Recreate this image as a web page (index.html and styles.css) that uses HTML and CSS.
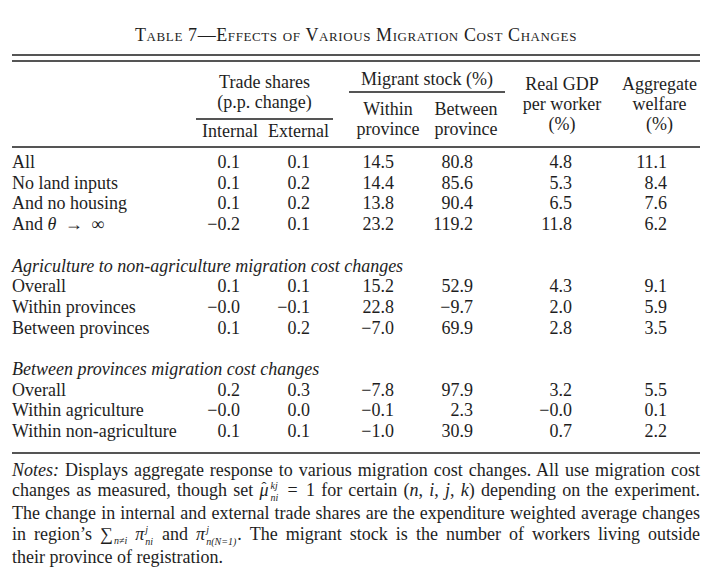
FILE: index.html
```html
<!DOCTYPE html>
<html lang="en">
<head>
<meta charset="utf-8">
<title>Table 7</title>
<link rel="stylesheet" href="styles.css">
</head>
<body>
<div class="page">
  <div class="title">Table 7—Effects of Various Migration Cost Changes</div>
  <div class="double-rule"></div>

  <div class="thead">
    <div class="hcell"></div>
    <div class="hcell grp-trade">
      <div class="grp-top">Trade shares<br>(p.p. change)</div>
      <div class="grp-sub">
        <span class="sub-a">Internal</span><span class="sub-b">External</span>
      </div>
    </div>
    <div class="hcell"></div>
    <div class="hcell grp-mig">
      <div class="grp-top">Migrant stock (%)</div>
      <div class="grp-sub mig-sub">
        <span class="sub-c">Within<br>province</span><span class="sub-c">Between<br>province</span>
      </div>
    </div>
    <div class="hcell grp-single">Real GDP<br>per worker<br>(%)</div>
    <div class="hcell grp-single">Aggregate<br>welfare<br>(%)</div>
  </div>

  <div class="tbody">
    <table class="data">
      <colgroup>
        <col class="w-label"><col class="w-c1"><col class="w-c2"><col class="w-sp"><col class="w-c3"><col class="w-c4"><col class="w-c5"><col class="w-c6">
      </colgroup>
      <tbody>
        <tr><td>All</td><td class="n1">0.1</td><td class="n2">0.1</td><td></td><td class="n3">14.5</td><td class="n4">80.8</td><td class="n5">4.8</td><td class="n6">11.1</td></tr>
        <tr><td>No land inputs</td><td class="n1">0.1</td><td class="n2">0.2</td><td></td><td class="n3">14.4</td><td class="n4">85.6</td><td class="n5">5.3</td><td class="n6">8.4</td></tr>
        <tr><td>And no housing</td><td class="n1">0.1</td><td class="n2">0.2</td><td></td><td class="n3">13.8</td><td class="n4">90.4</td><td class="n5">6.5</td><td class="n6">7.6</td></tr>
        <tr><td>And <i>θ</i> <span class="arrow">→</span> ∞</td><td class="n1">−0.2</td><td class="n2">0.1</td><td></td><td class="n3">23.2</td><td class="n4">119.2</td><td class="n5">11.8</td><td class="n6">6.2</td></tr>
        <tr class="blank"><td colspan="8"></td></tr>
        <tr><td colspan="8" class="section">Agriculture to non-agriculture migration cost changes</td></tr>
        <tr><td>Overall</td><td class="n1">0.1</td><td class="n2">0.1</td><td></td><td class="n3">15.2</td><td class="n4">52.9</td><td class="n5">4.3</td><td class="n6">9.1</td></tr>
        <tr><td>Within provinces</td><td class="n1">−0.0</td><td class="n2">−0.1</td><td></td><td class="n3">22.8</td><td class="n4">−9.7</td><td class="n5">2.0</td><td class="n6">5.9</td></tr>
        <tr><td>Between provinces</td><td class="n1">0.1</td><td class="n2">0.2</td><td></td><td class="n3">−7.0</td><td class="n4">69.9</td><td class="n5">2.8</td><td class="n6">3.5</td></tr>
        <tr class="blank"><td colspan="8"></td></tr>
        <tr><td colspan="8" class="section">Between provinces migration cost changes</td></tr>
        <tr><td>Overall</td><td class="n1">0.2</td><td class="n2">0.3</td><td></td><td class="n3">−7.8</td><td class="n4">97.9</td><td class="n5">3.2</td><td class="n6">5.5</td></tr>
        <tr><td>Within agriculture</td><td class="n1">−0.0</td><td class="n2">0.0</td><td></td><td class="n3">−0.1</td><td class="n4">2.3</td><td class="n5">−0.0</td><td class="n6">0.1</td></tr>
        <tr><td>Within non-agriculture</td><td class="n1">0.1</td><td class="n2">0.1</td><td></td><td class="n3">−1.0</td><td class="n4">30.9</td><td class="n5">0.7</td><td class="n6">2.2</td></tr>
      </tbody>
    </table>
  </div>

  <div class="notes">
    <div class="nl"><i>Notes:</i> Displays aggregate response to various migration cost changes. All use migration cost</div>
    <div class="nl">changes as measured, though set <i class="hat">μ</i><span class="ss ss-mu"><span>kj</span><span>ni</span></span> <span class="eq">=</span> 1 for certain <span class="paren">(</span><i>n</i>, <i>i</i>, <i>j</i>, <i>k</i><span class="paren">)</span> depending on the experiment.</div>
    <div class="nl">The change in internal and external trade shares are the expenditure weighted average changes</div>
    <div class="nl">in region’s <span class="sum">∑</span><span class="msub">n≠i</span> <i>π</i><span class="ss"><span>j</span><span>ni</span></span> and <i>π</i><span class="ss"><span>j</span><span><i>n</i>(<i>N</i>=1)</span></span>. The migrant stock is the number of workers living outside</div>
    <div class="nl last">their province of registration.</div>
  </div>
</div>
</body>
</html>
```

FILE: styles.css
```css
html, body {
  margin: 0;
  padding: 0;
  background: #ffffff;
}

body {
  font-family: "Liberation Serif", "Times New Roman", serif;
  font-size: 18px;
  color: #1e1e1e;
}

.page {
  width: 688px;
  margin-left: 12px;
  padding-top: 25px;
}

.title {
  font-size: 18px;
  line-height: 20px;
  text-align: center;
  font-variant: small-caps;
  letter-spacing: 0.6px;
}

.double-rule {
  margin-top: 9px;
  height: 4px;
  border-top: 2px solid #555;
  border-bottom: 2px solid #555;
}

/* header */
.thead {
  display: grid;
  grid-template-columns: 184px 137px 16px 156px 114px 81px;
  height: 84px;
  border-bottom: 2px solid #555;
  line-height: 20px;
  text-align: center;
}

.grp-trade {
  padding-top: 10px;
}

.grp-trade .grp-top {
  padding-bottom: 6px;
  border-bottom: 2px solid #555;
}

.grp-sub {
  display: flex;
  margin-top: 1px;
}

.sub-a {
  width: 68px;
  text-align: center;
}

.sub-b {
  width: 69px;
  text-align: center;
}

.grp-mig {
  padding-top: 7px;
}

.grp-mig .grp-top {
  padding-bottom: 2px;
  border-bottom: 2px solid #555;
}

.mig-sub {
  margin-top: 6px;
}

.sub-c {
  width: 78px;
  text-align: center;
}

.grp-single {
  padding-top: 12px;
}

/* body */
.tbody {
  padding-top: 4px;
  padding-bottom: 10px;
  border-bottom: 2px solid #555;
}

.data {
  width: 688px;
  table-layout: fixed;
  border-collapse: collapse;
}

.data td {
  padding: 0;
  line-height: 20.7px;
  height: 20.7px;
  white-space: nowrap;
  text-align: right;
}

.data td:first-child {
  text-align: left;
}

.data td.section {
  text-align: left;
  font-style: italic;
}

.w-label { width: 184px; }
.w-c1 { width: 68px; }
.w-c2 { width: 69px; }
.w-sp { width: 16px; }
.w-c3 { width: 78px; }
.w-c4 { width: 78px; }
.w-c5 { width: 114px; }
.w-c6 { width: 81px; }

.data td.n1 { padding-right: 24px; }
.data td.n2 { padding-right: 23px; }
.data td.n3 { padding-right: 33px; }
.data td.n4 { padding-right: 32px; }
.data td.n5 { padding-right: 47px; }
.data td.n6 { padding-right: 33px; }

.arrow {
  margin: 0 4px;
}

/* notes */
.notes {
  margin-top: 6px;
  line-height: 20.6px;
}

.nl {
  text-align: justify;
  text-align-last: justify;
}

.nl.last {
  text-align-last: left;
}

.hat {
  position: relative;
  display: inline-block;
}

.hat::after {
  content: "\02C6";
  position: absolute;
  left: 2px;
  top: -3px;
  font-style: normal;
  font-size: 15px;
}

.ss {
  display: inline-flex;
  flex-direction: column;
  font-size: 10px;
  line-height: 11.5px;
  font-style: italic;
  vertical-align: 7px;
  margin-left: 1px;
  margin-right: 1px;
}

.ss-mu {
  margin-left: 2px;
}

.eq {
  margin: 0 2px;
}

.sum {
  font-size: 18px;
}

.msub {
  display: inline-block;
  font-size: 10px;
  line-height: 10px;
  font-style: italic;
  vertical-align: -4px;
  margin-left: 1px;
}
```
